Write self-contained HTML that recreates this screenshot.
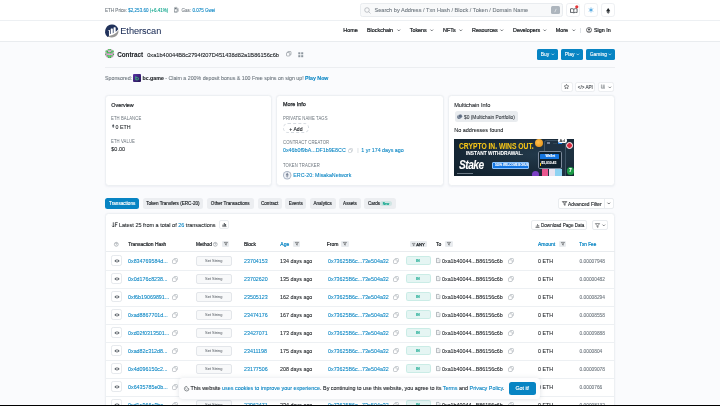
<!DOCTYPE html>
<html><head><meta charset="utf-8"><style>
html,body{margin:0;padding:0}
body{width:720px;height:406px;overflow:hidden;position:relative;background:#fafbfd;font-family:"Liberation Sans",sans-serif}
#w{position:absolute;left:0;top:0;width:720px;height:406px;will-change:transform;background:#fafbfd}
.a{position:absolute;white-space:nowrap;line-height:1;-webkit-text-stroke:0.08px currentColor}
svg.a{overflow:visible}
</style></head><body><div id="w">
<div class="a" style="left:0px;top:0px;width:720.00px;height:20.00px;background:#fff"></div>
<div class="a" style="left:0px;top:20px;width:720.00px;height:0.70px;background:#edf0f3"></div>
<div class="a" style="left:105px;top:9.00px;font-size:4.55px;color:#6c757d;font-weight:400;">ETH Price: <span style="color:#0784c3">$2,253.60</span> <span style="color:#00a186">(+6.41%)</span></div>
<svg class="a" style="left:174.3px;top:7.4px" width="4.4" height="5.4" viewBox="0 0 4.4 5.4"><path d="M0.5 5 V0.9 Q0.5 0.4 1 0.4 H2.6 Q3.1 0.4 3.1 0.9 V5 Z" fill="none" stroke="#6c757d" stroke-width="0.55"/><rect x="1" y="1" width="1.6" height="1.3" fill="#6c757d"/><path d="M3.1 2.4 H3.5 Q3.9 2.4 3.9 2.8 V4.2 Q3.9 4.6 4.2 4.4 V1.6 L3.5 0.9" fill="none" stroke="#6c757d" stroke-width="0.4"/><path d="M0 5.1 H3.6" stroke="#6c757d" stroke-width="0.5"/></svg>
<div class="a" style="left:181.5px;top:9.00px;font-size:4.55px;color:#6c757d;font-weight:400;">Gas: <span style="color:#0784c3">0.075 Gwei</span></div>
<div class="a" style="left:360.3px;top:3.2px;width:202.70px;height:13.40px;box-sizing:border-box;background:#f8f9fa;border:0.5px solid #e9ecef;border-radius:2.5px"></div>
<svg class="a" style="left:364px;top:6.5px" width="7" height="7" viewBox="0 0 7 7"><circle cx="3" cy="3" r="2.3" fill="none" stroke="#9aa0a6" stroke-width="0.6"/><path d="M4.7 4.7 L6.5 6.5" stroke="#9aa0a6" stroke-width="0.6"/></svg>
<div class="a" style="left:374.5px;top:8.00px;font-size:5.60px;color:#6c757d;font-weight:400;">Search by Address / Txn Hash / Block / Token / Domain Name</div>
<div class="a" style="left:551.3px;top:5.6px;width:8.70px;height:8.80px;background:#adb5bd;border-radius:1.5px"></div>
<svg class="a" style="left:554px;top:7.5px" width="3" height="5" viewBox="0 0 3 5"><path d="M2.2 0.8 L0.8 4.2" stroke="#fff" stroke-width="0.5"/></svg>
<div class="a" style="left:566.2px;top:3.1px;width:14.10px;height:13.60px;box-sizing:border-box;background:#fff;border:0.5px solid #eef0f3;border-radius:2.8px"></div>
<div class="a" style="left:583.6px;top:3.1px;width:14.00px;height:13.60px;box-sizing:border-box;background:#fff;border:0.5px solid #eef0f3;border-radius:2.8px"></div>
<div class="a" style="left:601px;top:3.1px;width:13.60px;height:13.60px;box-sizing:border-box;background:#fff;border:0.5px solid #eef0f3;border-radius:2.8px"></div>
<svg class="a" style="left:569.8px;top:7.6px" width="7.6" height="5.2" viewBox="0 0 7.6 5.2"><path d="M0.5 0.8 Q2 0.3 3.8 1.1 Q5.6 0.3 7.1 0.8 V4.5 Q5.6 4.1 3.8 4.8 Q2 4.1 0.5 4.5 Z M3.8 1.1 V4.8" fill="none" stroke="#343a40" stroke-width="0.75"/></svg>
<svg class="a" style="left:575px;top:4.8px" width="3.6" height="3.6" viewBox="0 0 3.6 3.6"><circle cx="1.8" cy="1.8" r="1.6" fill="#e5383b"/></svg>
<svg class="a" style="left:587.6px;top:7px" width="6" height="6" viewBox="0 0 6 6"><path d="M3 0.3 V5.7 M0.7 1.6 L5.3 4.4 M5.3 1.6 L0.7 4.4" stroke="#5dade2" stroke-width="0.6"/><circle cx="3" cy="3" r="1.3" fill="#5dade2"/></svg>
<svg class="a" style="left:605.8px;top:7.6px" width="4.4" height="5.8" viewBox="0 0 4.4 5.8"><path d="M2.2 0 L4.2 3 L2.2 4 L0.2 3 Z" fill="#212529"/><path d="M2.2 4.5 L4.2 3.5 L2.2 5.8 L0.2 3.5 Z" fill="#212529"/></svg>
<div class="a" style="left:0px;top:20.7px;width:720.00px;height:19.90px;background:#fff"></div>
<div class="a" style="left:0px;top:40.6px;width:720.00px;height:0.70px;background:#e9ecef"></div>
<svg class="a" style="left:104.6px;top:24.2px" width="13.5" height="13.5" viewBox="0 0 122 122"><path d="M25.79 58.415a5.157 5.157 0 0 1 5.181-5.156l8.59.028a5.164 5.164 0 0 1 5.164 5.164v32.48c.967-.287 2.209-.593 3.568-.913a4.3 4.3 0 0 0 3.317-4.187v-40.29a5.165 5.165 0 0 1 5.164-5.165h8.607a5.165 5.165 0 0 1 5.164 5.165v37.393s2.155-.872 4.254-1.758a4.311 4.311 0 0 0 2.632-3.967V33.634a5.164 5.164 0 0 1 5.163-5.164h8.606a5.164 5.164 0 0 1 5.164 5.164v36.71c7.462-5.408 15.024-11.912 21.025-19.733a8.662 8.662 0 0 0 1.319-8.092 60.792 60.792 0 0 0-110.25-5.034 60.788 60.788 0 0 0 13.094 78.109 7.688 7.688 0 0 0 8.34 1.073c.86-.385 2.137-1.003 3.537-1.75a4.295 4.295 0 0 0 2.4-3.835V58.415Z" fill="#21325b"/><path d="M25.6 110.516a60.793 60.793 0 0 0 96.44-49.228c0-1.402-.065-2.788-.158-4.168-22.218 33.134-63.238 48.63-96.28 53.4" fill="#979695"/></svg>
<div class="a" style="left:120.3px;top:27.00px;font-size:9.20px;color:#21325b;font-weight:400;letter-spacing:-0.05px;-webkit-text-stroke:0.05px currentColor">Etherscan</div>
<div class="a" style="left:343.3px;top:28.00px;font-size:5.40px;color:#212529;font-weight:400;-webkit-text-stroke:0.22px currentColor">Home</div>
<div class="a" style="left:367px;top:28.00px;font-size:5.40px;color:#212529;font-weight:400;-webkit-text-stroke:0.22px currentColor">Blockchain</div>
<div class="a" style="left:409.7px;top:28.00px;font-size:5.40px;color:#212529;font-weight:400;-webkit-text-stroke:0.22px currentColor">Tokens</div>
<div class="a" style="left:443px;top:28.00px;font-size:5.40px;color:#212529;font-weight:400;-webkit-text-stroke:0.22px currentColor">NFTs</div>
<div class="a" style="left:472px;top:28.00px;font-size:5.40px;color:#212529;font-weight:400;-webkit-text-stroke:0.22px currentColor">Resources</div>
<div class="a" style="left:513px;top:28.00px;font-size:5.40px;color:#212529;font-weight:400;-webkit-text-stroke:0.22px currentColor">Developers</div>
<div class="a" style="left:555.8px;top:28.00px;font-size:5.40px;color:#212529;font-weight:400;-webkit-text-stroke:0.22px currentColor">More</div>
<svg class="a" style="left:397px;top:29.2px" width="3.6" height="2.6" viewBox="0 0 3.6 2.6"><path d="M0.5 0.6 L1.8 1.9 L3.1 0.6" fill="none" stroke="#343a40" stroke-width="0.7"/></svg>
<svg class="a" style="left:430px;top:29.2px" width="3.6" height="2.6" viewBox="0 0 3.6 2.6"><path d="M0.5 0.6 L1.8 1.9 L3.1 0.6" fill="none" stroke="#343a40" stroke-width="0.7"/></svg>
<svg class="a" style="left:458.7px;top:29.2px" width="3.6" height="2.6" viewBox="0 0 3.6 2.6"><path d="M0.5 0.6 L1.8 1.9 L3.1 0.6" fill="none" stroke="#343a40" stroke-width="0.7"/></svg>
<svg class="a" style="left:500.2px;top:29.2px" width="3.6" height="2.6" viewBox="0 0 3.6 2.6"><path d="M0.5 0.6 L1.8 1.9 L3.1 0.6" fill="none" stroke="#343a40" stroke-width="0.7"/></svg>
<svg class="a" style="left:543px;top:29.2px" width="3.6" height="2.6" viewBox="0 0 3.6 2.6"><path d="M0.5 0.6 L1.8 1.9 L3.1 0.6" fill="none" stroke="#343a40" stroke-width="0.7"/></svg>
<svg class="a" style="left:571.8px;top:29.2px" width="3.6" height="2.6" viewBox="0 0 3.6 2.6"><path d="M0.5 0.6 L1.8 1.9 L3.1 0.6" fill="none" stroke="#343a40" stroke-width="0.7"/></svg>
<div class="a" style="left:580.3px;top:28px;width:0.50px;height:4.50px;background:#dee2e6"></div>
<svg class="a" style="left:585.6px;top:27.3px" width="6" height="6" viewBox="0 0 6 6"><circle cx="3" cy="3" r="2.5" fill="none" stroke="#212529" stroke-width="0.6"/><circle cx="3" cy="2.3" r="0.9" fill="#212529"/><path d="M1.4 4.6 Q3 3.2 4.6 4.6" stroke="#212529" stroke-width="0.6" fill="none"/></svg>
<div class="a" style="left:593.9px;top:28.00px;font-size:5.40px;color:#212529;font-weight:400;-webkit-text-stroke:0.22px currentColor">Sign In</div>
<svg class="a" style="left:105px;top:49.4px" width="9.3" height="9.3" viewBox="0 0 9.3 9.3"><defs><clipPath id="av"><circle cx="4.65" cy="4.65" r="4.65"/></clipPath></defs><g clip-path="url(#av)"><rect x="0.00" y="0.00" width="1.6" height="1.6" fill="#3cb44b"/><rect x="1.55" y="0.00" width="1.6" height="1.6" fill="#e58fd6"/><rect x="3.10" y="0.00" width="1.6" height="1.6" fill="#3cb44b"/><rect x="4.65" y="0.00" width="1.6" height="1.6" fill="#3cb44b"/><rect x="6.20" y="0.00" width="1.6" height="1.6" fill="#e58fd6"/><rect x="7.75" y="0.00" width="1.6" height="1.6" fill="#3cb44b"/><rect x="0.00" y="1.55" width="1.6" height="1.6" fill="#3cb44b"/><rect x="1.55" y="1.55" width="1.6" height="1.6" fill="#3cb44b"/><rect x="3.10" y="1.55" width="1.6" height="1.6" fill="#e58fd6"/><rect x="4.65" y="1.55" width="1.6" height="1.6" fill="#e58fd6"/><rect x="6.20" y="1.55" width="1.6" height="1.6" fill="#3cb44b"/><rect x="7.75" y="1.55" width="1.6" height="1.6" fill="#3cb44b"/><rect x="0.00" y="3.10" width="1.6" height="1.6" fill="#e58fd6"/><rect x="1.55" y="3.10" width="1.6" height="1.6" fill="#3cb44b"/><rect x="3.10" y="3.10" width="1.6" height="1.6" fill="#3cb44b"/><rect x="4.65" y="3.10" width="1.6" height="1.6" fill="#3cb44b"/><rect x="6.20" y="3.10" width="1.6" height="1.6" fill="#3cb44b"/><rect x="7.75" y="3.10" width="1.6" height="1.6" fill="#e58fd6"/><rect x="0.00" y="4.65" width="1.6" height="1.6" fill="#3cb44b"/><rect x="1.55" y="4.65" width="1.6" height="1.6" fill="#e58fd6"/><rect x="3.10" y="4.65" width="1.6" height="1.6" fill="#e58fd6"/><rect x="4.65" y="4.65" width="1.6" height="1.6" fill="#e58fd6"/><rect x="6.20" y="4.65" width="1.6" height="1.6" fill="#e58fd6"/><rect x="7.75" y="4.65" width="1.6" height="1.6" fill="#3cb44b"/><rect x="0.00" y="6.20" width="1.6" height="1.6" fill="#e58fd6"/><rect x="1.55" y="6.20" width="1.6" height="1.6" fill="#3cb44b"/><rect x="3.10" y="6.20" width="1.6" height="1.6" fill="#3cb44b"/><rect x="4.65" y="6.20" width="1.6" height="1.6" fill="#3cb44b"/><rect x="6.20" y="6.20" width="1.6" height="1.6" fill="#3cb44b"/><rect x="7.75" y="6.20" width="1.6" height="1.6" fill="#e58fd6"/><rect x="0.00" y="7.75" width="1.6" height="1.6" fill="#e58fd6"/><rect x="1.55" y="7.75" width="1.6" height="1.6" fill="#e58fd6"/><rect x="3.10" y="7.75" width="1.6" height="1.6" fill="#3cb44b"/><rect x="4.65" y="7.75" width="1.6" height="1.6" fill="#3cb44b"/><rect x="6.20" y="7.75" width="1.6" height="1.6" fill="#e58fd6"/><rect x="7.75" y="7.75" width="1.6" height="1.6" fill="#e58fd6"/></g></svg>
<div class="a" style="left:117.2px;top:52.00px;font-size:6.30px;color:#212529;font-weight:700;">Contract</div>
<div class="a" style="left:147.2px;top:53.00px;font-size:5.67px;color:#212529;font-weight:400;-webkit-text-stroke:0.1px currentColor">0xa1b40044B8c2794f207D451438d82a1B86156c6b</div>
<svg class="a" style="left:285.8px;top:51.3px" width="5.5" height="5.5" viewBox="0 0 5.5 5.5"><rect x="0.5" y="1.6" width="3.3" height="3.4" rx="0.6" fill="none" stroke="#6c757d" stroke-width="0.5"/><path d="M1.7 1.5 V0.9 Q1.7 0.5 2.1 0.5 H4.5 Q5 0.5 5 1 V3.4 Q5 3.8 4.6 3.8 H3.9" fill="none" stroke="#6c757d" stroke-width="0.5"/></svg>
<svg class="a" style="left:297.5px;top:51.5px" width="5.5" height="5.5" viewBox="0 0 5.5 5.5"><rect x="0.3" y="0.3" width="2" height="2" fill="#8c959d"/><rect x="3.2" y="0.3" width="2" height="2" fill="#8c959d"/><rect x="0.3" y="3.2" width="2" height="2" fill="#8c959d"/><rect x="3.2" y="3.2" width="2" height="2" fill="#8c959d"/></svg>
<div class="a" style="left:536.9px;top:49px;width:20.90px;height:10.60px;background:#0784c3;border-radius:1.6px"></div>
<div class="a" style="left:540.6999999999999px;top:53.00px;font-size:4.95px;color:#fff;font-weight:400;-webkit-text-stroke:0.1px currentColor">Buy</div>
<svg class="a" style="left:550.9px;top:52.9px" width="3.6" height="2.6" viewBox="0 0 3.6 2.6"><path d="M0.5 0.7 L1.8 2 L3.1 0.7" fill="none" stroke="#fff" stroke-width="0.6"/></svg>
<div class="a" style="left:561px;top:49px;width:21.50px;height:10.60px;background:#0784c3;border-radius:1.6px"></div>
<div class="a" style="left:564.8px;top:53.00px;font-size:4.95px;color:#fff;font-weight:400;-webkit-text-stroke:0.1px currentColor">Play</div>
<svg class="a" style="left:575.6px;top:52.9px" width="3.6" height="2.6" viewBox="0 0 3.6 2.6"><path d="M0.5 0.7 L1.8 2 L3.1 0.7" fill="none" stroke="#fff" stroke-width="0.6"/></svg>
<div class="a" style="left:585.9px;top:49px;width:29.10px;height:10.60px;background:#0784c3;border-radius:1.6px"></div>
<div class="a" style="left:589.6999999999999px;top:53.00px;font-size:4.95px;color:#fff;font-weight:400;-webkit-text-stroke:0.1px currentColor">Gaming</div>
<svg class="a" style="left:608.1px;top:52.9px" width="3.6" height="2.6" viewBox="0 0 3.6 2.6"><path d="M0.5 0.7 L1.8 2 L3.1 0.7" fill="none" stroke="#fff" stroke-width="0.6"/></svg>
<div class="a" style="left:105px;top:67px;width:510.00px;height:0.60px;background:#eceef1"></div>
<div class="a" style="left:105px;top:76.00px;font-size:5.30px;color:#6c757d;font-weight:400;"><span style="color:#6c757d">Sponsored:</span></div>
<div class="a" style="left:133.3px;top:74.3px;width:7.50px;height:7.40px;background:linear-gradient(135deg,#5b34a8,#241552);border-radius:1px"></div>
<svg class="a" style="left:135.2px;top:75.6px" width="4" height="4.5" viewBox="0 0 4 4.5"><path d="M0.8 0.3 V3.8 H2.6 Q3.6 3.8 3.6 2.7 Q3.6 1.7 2.6 1.7 H0.8" fill="none" stroke="#3ddc84" stroke-width="0.7"/></svg>
<div class="a" style="left:142.5px;top:76.00px;font-size:5.25px;color:#6c757d;font-weight:400;"><b style="color:#212529">bc.game</b> <span style="color:#6c757d">- Claim a 200% deposit bonus &amp; 100 Free spins on sign up!</span> <b style="color:#0784c3">Play Now</b></div>
<div class="a" style="left:560.9px;top:82px;width:11.80px;height:9.50px;box-sizing:border-box;background:#fff;border:0.5px solid #eceef1;border-radius:2.2px"></div>
<div class="a" style="left:574.6px;top:82px;width:20.80px;height:9.50px;box-sizing:border-box;background:#fff;border:0.5px solid #eceef1;border-radius:2.2px"></div>
<div class="a" style="left:597.8px;top:82px;width:16.70px;height:9.50px;box-sizing:border-box;background:#fff;border:0.5px solid #eceef1;border-radius:2.2px"></div>
<svg class="a" style="left:564.3px;top:84.3px" width="5" height="5" viewBox="0 0 5 5"><path d="M2.5 0.3 L3.2 1.8 L4.8 2 L3.6 3.1 L3.9 4.7 L2.5 3.9 L1.1 4.7 L1.4 3.1 L0.2 2 L1.8 1.8Z" fill="none" stroke="#212529" stroke-width="0.5"/></svg>
<div class="a" style="left:577.8px;top:86.00px;font-size:4.60px;color:#343a40;font-weight:400;">&lt;/&gt; API</div>
<svg class="a" style="left:601.2px;top:84.4px" width="4.4" height="4.6" viewBox="0 0 4.4 4.6"><path d="M0.4 0.5 V4.2 H4 M1.6 1.2 H3.8 M1.6 2.3 H3.8 M1.6 3.3 H3.8" stroke="#495057" stroke-width="0.5" fill="none"/></svg>
<svg class="a" style="left:607.6px;top:85.5px" width="3.6" height="2.6" viewBox="0 0 3.6 2.6"><path d="M0.5 0.7 L1.8 2 L3.1 0.7" fill="none" stroke="#343a40" stroke-width="0.6"/></svg>
<div class="a" style="left:105.1px;top:94.9px;width:166.80px;height:90.80px;box-sizing:border-box;background:#fff;border:0.5px solid #edf0f3;border-radius:3.5px;box-shadow:0 0.5px 2px rgba(189,197,209,.2)"></div>
<div class="a" style="left:276.2px;top:94.9px;width:167.40px;height:90.80px;box-sizing:border-box;background:#fff;border:0.5px solid #edf0f3;border-radius:3.5px;box-shadow:0 0.5px 2px rgba(189,197,209,.2)"></div>
<div class="a" style="left:448.4px;top:94.9px;width:166.30px;height:90.80px;box-sizing:border-box;background:#fff;border:0.5px solid #edf0f3;border-radius:3.5px;box-shadow:0 0.5px 2px rgba(189,197,209,.2)"></div>
<div class="a" style="left:111.3px;top:103.00px;font-size:5.40px;color:#212529;font-weight:400;-webkit-text-stroke:0.18px currentColor">Overview</div>
<div class="a" style="left:111.3px;top:117.00px;font-size:4.70px;color:#6c757d;font-weight:400;transform:scaleX(0.9000);transform-origin:0 0;letter-spacing:0.1px;-webkit-text-stroke:0px">ETH BALANCE</div>
<svg class="a" style="left:111.7px;top:124.4px" width="2.4" height="4" viewBox="0 0 2.4 4"><path d="M1.2 0 L2.4 2 L1.2 2.7 L0 2Z M1.2 3 L2.4 2.3 L1.2 4 L0 2.3Z" fill="#495057"/></svg>
<div class="a" style="left:115.6px;top:125.00px;font-size:5.30px;color:#212529;font-weight:400;">0 ETH</div>
<div class="a" style="left:111.3px;top:140.00px;font-size:4.70px;color:#6c757d;font-weight:400;transform:scaleX(0.9000);transform-origin:0 0;letter-spacing:0.1px;-webkit-text-stroke:0px">ETH VALUE</div>
<div class="a" style="left:111.3px;top:147.00px;font-size:5.50px;color:#212529;font-weight:400;">$0.00</div>
<div class="a" style="left:283px;top:102.00px;font-size:5.40px;color:#212529;font-weight:400;-webkit-text-stroke:0.25px currentColor">More Info</div>
<div class="a" style="left:283px;top:117.00px;font-size:4.70px;color:#6c757d;font-weight:400;transform:scaleX(0.9000);transform-origin:0 0;letter-spacing:0.1px;-webkit-text-stroke:0px">PRIVATE NAME TAGS</div>
<div class="a" style="left:283px;top:123.2px;width:26.30px;height:10.20px;box-sizing:border-box;border:0.6px dashed #d5dae0;border-radius:5px;background:#fff"></div>
<div class="a" style="left:289.3px;top:127.00px;font-size:5.10px;color:#212529;font-weight:400;-webkit-text-stroke:0.12px currentColor">+ Add</div>
<div class="a" style="left:283px;top:141.00px;font-size:4.70px;color:#6c757d;font-weight:400;transform:scaleX(0.9000);transform-origin:0 0;letter-spacing:0.1px;-webkit-text-stroke:0px">CONTRACT CREATOR</div>
<div class="a" style="left:283px;top:148.00px;font-size:5.30px;color:#0784c3;font-weight:400;">0x46b0f9bA...DF1b9E8CC</div>
<svg class="a" style="left:348px;top:147.7px" width="5" height="5" viewBox="0 0 5 5"><rect x="0.5" y="1.5" width="3" height="3" rx="0.5" fill="none" stroke="#adb5bd" stroke-width="0.45"/><path d="M1.6 1.4 V0.9 Q1.6 0.5 2 0.5 H4 Q4.5 0.5 4.5 1 V3 Q4.5 3.4 4.1 3.4 H3.6" fill="none" stroke="#adb5bd" stroke-width="0.45"/></svg>
<div class="a" style="left:357.2px;top:148.00px;font-size:5.50px;color:#ced4da;font-weight:400;">|</div>
<div class="a" style="left:361.3px;top:148.00px;font-size:5.35px;color:#0784c3;font-weight:400;">1 yr 174 days ago</div>
<div class="a" style="left:283px;top:164.00px;font-size:4.70px;color:#6c757d;font-weight:400;transform:scaleX(0.9000);transform-origin:0 0;letter-spacing:0.1px;-webkit-text-stroke:0px">TOKEN TRACKER</div>
<svg class="a" style="left:283px;top:170.5px" width="8.4" height="8.4" viewBox="0 0 8.4 8.4"><circle cx="4.2" cy="4.2" r="4.2" fill="#aab4c4"/><circle cx="4.2" cy="4.2" r="3.2" fill="#eef1f6"/><path d="M4.2 1.5 L5.7 4.1 L4.2 5 L2.7 4.1Z M4.2 5.4 L5.7 4.5 L4.2 6.8 L2.7 4.5Z" fill="#7d8799"/></svg>
<div class="a" style="left:293.3px;top:173.00px;font-size:5.30px;color:#0784c3;font-weight:400;">ERC-20: MisakaNetwork</div>
<div class="a" style="left:454.2px;top:103.00px;font-size:5.60px;color:#212529;font-weight:400;-webkit-text-stroke:0.1px currentColor">Multichain Info</div>
<div class="a" style="left:454.5px;top:111.3px;width:63.50px;height:10.50px;background:#e9ecef;border-radius:2.5px"></div>
<svg class="a" style="left:457.3px;top:114.1px" width="5.4" height="5.4" viewBox="0 0 5.4 5.4"><circle cx="2.1" cy="3.1" r="2" fill="#5c6b80"/><circle cx="3.3" cy="2.2" r="2" fill="#5c6b80" stroke="#e9ecef" stroke-width="0.4"/></svg>
<div class="a" style="left:464px;top:116.00px;font-size:4.85px;color:#343a40;font-weight:400;">$0 (Multichain Portfolio)</div>
<div class="a" style="left:454.2px;top:128.00px;font-size:5.50px;color:#212529;font-weight:400;">No addresses found</div>
<div class="a" style="left:454.3px;top:138.8px;width:120.2px;height:37.5px;background:#10222f;overflow:hidden">
<div class="a" style="left:0;top:0;width:121px;height:38px;background:radial-gradient(ellipse at 70% 40%,#22394a 0%,#1a2c3b 45%,#0f1f2b 100%)"></div>
<div class="a" style="left:4.4px;top:4.3px;font-size:8.2px;font-weight:700;color:#f5c518;line-height:1;transform:scaleX(0.82);transform-origin:0 0">CRYPTO IN. WINS OUT.</div>
<div class="a" style="left:12px;top:12.2px;font-size:5.6px;font-weight:700;color:#fff;line-height:1;transform:scaleX(0.87);transform-origin:0 0">INSTANT WITHDRAWAL.</div>
<div class="a" style="left:5px;top:20px;font-size:12px;font-weight:700;font-style:italic;color:#fff;line-height:1;letter-spacing:-0.6px;transform:scaleX(0.85);transform-origin:0 0">Stake</div>
<div class="a" style="left:2.5px;top:34px;width:16px;height:1px;background:#6c7a86"></div>
<div class="a" style="left:38.2px;top:23.7px;width:36.8px;height:7px;box-sizing:border-box;background:#1475e1;border:0.5px solid #8cc4ff;border-radius:1px"></div>
<div class="a" style="left:41.2px;top:25.7px;font-size:3.3px;font-weight:700;color:#fff;line-height:1;transform:scaleX(0.85);transform-origin:0 0">100% WELCOME BONUS</div>
<div class="a" style="left:89.7px;top:1.2px;width:21.7px;height:40px;box-sizing:border-box;background:#1f3243;border:0.9px solid #3e5466;border-radius:2.5px"></div>
<div class="a" style="left:92.5px;top:3.6px;width:3.5px;height:1.6px;background:#b1bad3;opacity:.6"></div>
<div class="a" style="left:98.5px;top:3.8px;width:4.5px;height:1.4px;background:#2f4553"></div>
<div class="a" style="left:104px;top:3.6px;width:4px;height:2px;background:#1475e1"></div>
<div class="a" style="left:84px;top:12.2px;width:23.7px;height:17.6px;box-sizing:border-box;background:#0f212e;border:0.8px solid #7d8a9c;border-radius:1.8px"></div>
<div class="a" style="left:85.6px;top:15.3px;width:19.6px;height:4.9px;background:#1475e1;border-radius:0.5px"></div>
<div class="a" style="left:91.3px;top:16.3px;font-size:3.3px;font-weight:700;color:#fff;line-height:1">Wallet</div>
<div class="a" style="left:85.7px;top:23.8px;width:0.8px;height:3px;background:#f5c518"></div>
<div class="a" style="left:87px;top:23.6px;font-size:3.4px;color:#fff;font-weight:700;line-height:1">$5,010.45</div>
<div class="a" style="left:80.9px;top:0.3px;width:7.8px;height:7.8px;background:radial-gradient(circle at 40% 40%,#ffc14d,#e08a10);border-radius:50%"></div>
<div class="a" style="left:111.4px;top:2.9px;width:7.8px;height:7.8px;box-sizing:border-box;background:#d62a3f;border:0.9px solid #fff;border-radius:50%"></div>
<div class="a" style="left:112.4px;top:28.2px;width:7.6px;height:7.6px;background:#1c9b47;border-radius:50%"></div>
<div class="a" style="left:114.6px;top:29.6px;font-size:5px;font-weight:700;color:#fff;line-height:1">7</div>
<div class="a" style="left:77.3px;top:32.2px;width:7px;height:7px;background:#7b3fc4;border-radius:50%"></div>
<div class="a" style="left:88px;top:30.4px;width:6.2px;height:7.5px;background:#e8578f"></div>
<div class="a" style="left:94.6px;top:30.4px;width:6.2px;height:7.5px;background:#e9e4f0"></div>
<div class="a" style="left:101.2px;top:30.4px;width:6.2px;height:7.5px;background:#8fd3f2"></div>
</div>
<div class="a" style="left:558px;top:137.5px;width:8.70px;height:5.20px;background:#fff;border-radius:2px"></div>
<div class="a" style="left:559.6px;top:139.00px;font-size:4.20px;color:#212529;font-weight:400;">Ad</div>
<div class="a" style="left:105.2px;top:198.1px;width:34.00px;height:10.80px;background:#0784c3;border-radius:2.5px"></div>
<div class="a" style="left:105.2px;width:34.00px;text-align:center;top:202.00px;font-size:4.60px;color:#fff;font-weight:400;-webkit-text-stroke:0.15px currentColor">Transactions</div>
<div class="a" style="left:142.7px;top:198.1px;width:60.40px;height:10.80px;background:#eceef1;border-radius:2.5px"></div>
<div class="a" style="left:142.7px;width:60.40px;text-align:center;top:202.00px;font-size:4.60px;color:#212529;font-weight:400;-webkit-text-stroke:0.15px currentColor">Token Transfers (ERC-20)</div>
<div class="a" style="left:206.9px;top:198.1px;width:46.70px;height:10.80px;background:#eceef1;border-radius:2.5px"></div>
<div class="a" style="left:206.9px;width:46.70px;text-align:center;top:202.00px;font-size:4.60px;color:#212529;font-weight:400;-webkit-text-stroke:0.15px currentColor">Other Transactions</div>
<div class="a" style="left:257.5px;top:198.1px;width:24.40px;height:10.80px;background:#eceef1;border-radius:2.5px"></div>
<div class="a" style="left:257.5px;width:24.40px;text-align:center;top:202.00px;font-size:4.60px;color:#212529;font-weight:400;-webkit-text-stroke:0.15px currentColor">Contract</div>
<div class="a" style="left:285.3px;top:198.1px;width:20.80px;height:10.80px;background:#eceef1;border-radius:2.5px"></div>
<div class="a" style="left:285.3px;width:20.80px;text-align:center;top:202.00px;font-size:4.60px;color:#212529;font-weight:400;-webkit-text-stroke:0.15px currentColor">Events</div>
<div class="a" style="left:309.7px;top:198.1px;width:25.90px;height:10.80px;background:#eceef1;border-radius:2.5px"></div>
<div class="a" style="left:309.7px;width:25.90px;text-align:center;top:202.00px;font-size:4.60px;color:#212529;font-weight:400;-webkit-text-stroke:0.15px currentColor">Analytics</div>
<div class="a" style="left:339.4px;top:198.1px;width:21.20px;height:10.80px;background:#eceef1;border-radius:2.5px"></div>
<div class="a" style="left:339.4px;width:21.20px;text-align:center;top:202.00px;font-size:4.60px;color:#212529;font-weight:400;-webkit-text-stroke:0.15px currentColor">Assets</div>
<div class="a" style="left:363.9px;top:198.1px;width:31.90px;height:10.80px;background:#eceef1;border-radius:2.5px"></div>
<div class="a" style="left:367.9px;top:202.00px;font-size:4.60px;color:#212529;font-weight:400;-webkit-text-stroke:0.15px currentColor">Cards</div>
<div class="a" style="left:379.8px;top:200.6px;width:12.40px;height:5.40px;background:rgba(0,161,134,0.12);border-radius:2.5px"></div>
<div class="a" style="left:379.8px;width:12.40px;text-align:center;top:203.00px;font-size:3.20px;color:#00a186;font-weight:700;">New</div>
<div class="a" style="left:557.6px;top:198.4px;width:56.70px;height:10.60px;box-sizing:border-box;background:#fff;border:0.5px solid #e9ecef;border-radius:2px"></div>
<div class="a" style="left:603.9px;top:198.4px;width:0.50px;height:10.60px;background:#e9ecef"></div>
<svg class="a" style="left:561.5px;top:201.1px" width="5.2" height="5" viewBox="0 0 5.2 5"><path d="M0.4 0.6 H4.8 L3.1 2.6 V4.4 L2.1 3.8 V2.6 Z" fill="none" stroke="#212529" stroke-width="0.6"/><path d="M1.2 0.6 L2.6 2.2 L4 0.6" fill="none" stroke="#212529" stroke-width="0.4"/></svg>
<div class="a" style="left:568px;top:203.00px;font-size:4.85px;color:#212529;font-weight:400;-webkit-text-stroke:0.12px currentColor">Advanced Filter</div>
<svg class="a" style="left:607.3px;top:202.2px" width="3.6" height="2.6" viewBox="0 0 3.6 2.6"><path d="M0.5 0.7 L1.8 2 L3.1 0.7" fill="none" stroke="#212529" stroke-width="0.65"/></svg>
<div class="a" style="left:105.2px;top:213.2px;width:510.00px;height:206.80px;box-sizing:border-box;background:#fff;border:0.5px solid #edf0f3;border-radius:3.5px;box-shadow:0 0.5px 2px rgba(189,197,209,.2)"></div>
<svg class="a" style="left:111.6px;top:221.9px" width="6" height="5.6" viewBox="0 0 6 5.6"><path d="M1.3 0.3 V5 M0.2 3.8 L1.3 5 L2.4 3.8" stroke="#212529" stroke-width="0.7" fill="none"/><path d="M3.3 0.6 H5.7 M3.3 0.6 V5 M3.3 2.6 H5.2" stroke="#212529" stroke-width="0.7" fill="none"/></svg>
<div class="a" style="left:118.9px;top:223.00px;font-size:5.50px;color:#212529;font-weight:400;">Latest 25 from a total of <span style="color:#0784c3">26</span> transactions</div>
<div class="a" style="left:219px;top:220.2px;width:9.60px;height:9.20px;box-sizing:border-box;background:#fff;border:0.5px solid #e9ecef;border-radius:2px"></div>
<svg class="a" style="left:221.6px;top:222.2px" width="5" height="5" viewBox="0 0 5 5"><path d="M1 4.4 V2.6 M2.3 4.4 V1 M3.6 4.4 V2" stroke="#343a40" stroke-width="0.9"/><path d="M0.3 4.6 H4.7" stroke="#343a40" stroke-width="0.4"/></svg>
<div class="a" style="left:530.9px;top:220px;width:56.30px;height:10.40px;box-sizing:border-box;background:#fff;border:0.5px solid #e9ecef;border-radius:2px"></div>
<svg class="a" style="left:534.5px;top:222.8px" width="5" height="5" viewBox="0 0 5 5"><path d="M0.5 4.5 H4.5 M1.3 3.8 V2.6 M2.5 3.8 V1 M3.7 3.8 V2" stroke="#212529" stroke-width="0.55"/></svg>
<div class="a" style="left:541px;top:224.00px;font-size:4.60px;color:#212529;font-weight:400;-webkit-text-stroke:0.1px currentColor">Download Page Data</div>
<div class="a" style="left:591.5px;top:220px;width:16.50px;height:9.70px;box-sizing:border-box;background:#fff;border:0.5px solid #e9ecef;border-radius:2px"></div>
<svg class="a" style="left:594.5px;top:222.6px" width="5" height="5" viewBox="0 0 5 5"><path d="M0.4 0.6 H4.6 L3 2.6 V4.4 L2 3.8 V2.6 Z" fill="none" stroke="#212529" stroke-width="0.5"/></svg>
<svg class="a" style="left:601.5px;top:223.9px" width="3.6" height="2.6" viewBox="0 0 3.6 2.6"><path d="M0.5 0.6 L1.8 1.9 L3.1 0.6" fill="none" stroke="#212529" stroke-width="0.55"/></svg>
<svg class="a" style="left:114.3px;top:241.9px" width="4.6" height="4.6" viewBox="0 0 4.6 4.6"><circle cx="2.3" cy="2.3" r="1.95" fill="none" stroke="#6c757d" stroke-width="0.45"/><path d="M1.6 1.8 Q1.7 1.1 2.3 1.1 Q3 1.1 3 1.7 Q3 2.2 2.3 2.5 V2.8 M2.3 3.3 V3.5" stroke="#6c757d" stroke-width="0.45" fill="none"/></svg>
<div class="a" style="left:128.2px;top:243.00px;font-size:4.90px;color:#212529;font-weight:400;-webkit-text-stroke:0.2px currentColor">Transaction Hash</div>
<div class="a" style="left:195.9px;top:243.00px;font-size:4.80px;color:#212529;font-weight:400;-webkit-text-stroke:0.2px currentColor">Method</div>
<svg class="a" style="left:213.4px;top:241.9px" width="4.6" height="4.6" viewBox="0 0 4.6 4.6"><circle cx="2.3" cy="2.3" r="1.95" fill="none" stroke="#6c757d" stroke-width="0.45"/><path d="M1.6 1.8 Q1.7 1.1 2.3 1.1 Q3 1.1 3 1.7 Q3 2.2 2.3 2.5 V2.8 M2.3 3.3 V3.5" stroke="#6c757d" stroke-width="0.45" fill="none"/></svg>
<div class="a" style="left:221.6px;top:241.1px;width:7.80px;height:6.00px;background:#e9ecef;border-radius:1.2px"></div>
<svg class="a" style="left:223.6px;top:242.4px" width="3.8" height="3.6" viewBox="0 0 3.8 3.6"><path d="M0.3 0.4 H3.5 L2.3 1.9 V3.2 L1.5 2.8 V1.9 Z" fill="none" stroke="#212529" stroke-width="0.45"/></svg>
<div class="a" style="left:243.9px;top:242.00px;font-size:5.00px;color:#212529;font-weight:400;-webkit-text-stroke:0.2px currentColor">Block</div>
<div class="a" style="left:280.3px;top:242.00px;font-size:5.00px;color:#0784c3;font-weight:400;-webkit-text-stroke:0.2px currentColor">Age</div>
<div class="a" style="left:292.5px;top:241.1px;width:7.80px;height:6.00px;background:#e9ecef;border-radius:1.2px"></div>
<svg class="a" style="left:294.5px;top:242.4px" width="3.8" height="3.6" viewBox="0 0 3.8 3.6"><path d="M0.3 0.4 H3.5 L2.3 1.9 V3.2 L1.5 2.8 V1.9 Z" fill="none" stroke="#212529" stroke-width="0.45"/></svg>
<div class="a" style="left:326.7px;top:242.00px;font-size:5.00px;color:#212529;font-weight:400;-webkit-text-stroke:0.2px currentColor">From</div>
<div class="a" style="left:341.4px;top:241.1px;width:7.80px;height:6.00px;background:#e9ecef;border-radius:1.2px"></div>
<svg class="a" style="left:343.4px;top:242.4px" width="3.8" height="3.6" viewBox="0 0 3.8 3.6"><path d="M0.3 0.4 H3.5 L2.3 1.9 V3.2 L1.5 2.8 V1.9 Z" fill="none" stroke="#212529" stroke-width="0.45"/></svg>
<div class="a" style="left:410px;top:241.1px;width:16.70px;height:6.00px;background:#e9ecef;border-radius:1.2px"></div>
<svg class="a" style="left:411.5px;top:242.5px" width="3.4" height="3.2" viewBox="0 0 3.4 3.2"><path d="M0.3 0.4 H3.1 L2 1.7 V2.9 L1.3 2.5 V1.7 Z" fill="none" stroke="#212529" stroke-width="0.4"/></svg>
<div class="a" style="left:416.3px;top:243.00px;font-size:4.10px;color:#212529;font-weight:400;-webkit-text-stroke:0.25px currentColor">ANY</div>
<div class="a" style="left:436.1px;top:242.00px;font-size:5.00px;color:#212529;font-weight:400;-webkit-text-stroke:0.2px currentColor">To</div>
<div class="a" style="left:445px;top:241.1px;width:7.80px;height:6.00px;background:#e9ecef;border-radius:1.2px"></div>
<svg class="a" style="left:447.0px;top:242.4px" width="3.8" height="3.6" viewBox="0 0 3.8 3.6"><path d="M0.3 0.4 H3.5 L2.3 1.9 V3.2 L1.5 2.8 V1.9 Z" fill="none" stroke="#212529" stroke-width="0.45"/></svg>
<div class="a" style="left:538px;top:242.00px;font-size:5.00px;color:#0784c3;font-weight:400;-webkit-text-stroke:0.2px currentColor">Amount</div>
<div class="a" style="left:558.9px;top:241.1px;width:7.00px;height:6.00px;background:#e9ecef;border-radius:1.2px"></div>
<svg class="a" style="left:560.5px;top:242.4px" width="3.8" height="3.6" viewBox="0 0 3.8 3.6"><path d="M0.3 0.4 H3.5 L2.3 1.9 V3.2 L1.5 2.8 V1.9 Z" fill="none" stroke="#212529" stroke-width="0.45"/></svg>
<div class="a" style="left:579.2px;top:243.00px;font-size:4.65px;color:#0784c3;font-weight:400;-webkit-text-stroke:0.2px currentColor">Txn Fee</div>
<div class="a" style="left:105.5px;top:251px;width:509.40px;height:0.60px;background:#e9ecef"></div>
<div class="a" style="left:110.9px;top:255.4px;width:11.10px;height:10.70px;box-sizing:border-box;background:#fff;border:0.5px solid #e6e9ed;border-radius:2.2px"></div>
<svg class="a" style="left:113.6px;top:258.7px" width="6" height="4.2" viewBox="0 0 6 4.2"><path d="M0.3 2.1 Q3 -0.9 5.7 2.1 Q3 5.1 0.3 2.1Z" fill="#5c636a"/><circle cx="3" cy="2.1" r="1.05" fill="#fff"/><circle cx="3" cy="2.1" r="0.6" fill="#343a40"/></svg>
<div class="a" style="left:128px;top:259.00px;font-size:5.80px;color:#0784c3;font-weight:400;transform:scaleX(0.9200);transform-origin:0 0;">0x834769584d...</div>
<svg class="a" style="left:172px;top:257.90000000000003px" width="6" height="6" viewBox="0 0 6 6"><rect x="0.5" y="1.8" width="3.7" height="3.7" rx="0.8" fill="none" stroke="#9aa2a9" stroke-width="0.55"/><path d="M1.9 1.6 V1.3 Q1.9 0.5 2.7 0.5 H4.6 Q5.4 0.5 5.4 1.3 V3.2 Q5.4 4 4.6 4 H4.3" fill="none" stroke="#9aa2a9" stroke-width="0.55"/></svg>
<div class="a" style="left:196.2px;top:256.1px;width:35.80px;height:9.50px;box-sizing:border-box;background:#f8f9fa;border:0.5px solid #e3e6ea;border-radius:2px"></div>
<div class="a" style="left:196.4px;width:35.40px;text-align:center;top:259.00px;font-size:4.40px;color:#495057;font-weight:400;transform:scaleX(0.9000);transform-origin:50% 0;-webkit-text-stroke:0px">Set String</div>
<div class="a" style="left:243.9px;top:259.00px;font-size:5.80px;color:#0784c3;font-weight:400;transform:scaleX(0.9200);transform-origin:0 0;">23704153</div>
<div class="a" style="left:280.3px;top:259.00px;font-size:5.80px;color:#212529;font-weight:400;transform:scaleX(0.9300);transform-origin:0 0;">134 days ago</div>
<div class="a" style="left:327.7px;top:259.00px;font-size:5.80px;color:#0784c3;font-weight:400;transform:scaleX(0.9200);transform-origin:0 0;">0x73625B6c...73e504a32</div>
<svg class="a" style="left:393.1px;top:257.90000000000003px" width="6" height="6" viewBox="0 0 6 6"><rect x="0.5" y="1.8" width="3.7" height="3.7" rx="0.8" fill="none" stroke="#9aa2a9" stroke-width="0.55"/><path d="M1.9 1.6 V1.3 Q1.9 0.5 2.7 0.5 H4.6 Q5.4 0.5 5.4 1.3 V3.2 Q5.4 4 4.6 4 H4.3" fill="none" stroke="#9aa2a9" stroke-width="0.55"/></svg>
<div class="a" style="left:405.9px;top:256.1px;width:25.10px;height:9.40px;box-sizing:border-box;background:rgba(0,161,134,.1);border:0.5px solid rgba(0,161,134,.12);border-radius:2.2px"></div>
<div class="a" style="left:416.3px;top:260.00px;font-size:3.30px;color:#00a186;font-weight:700;">IN</div>
<svg class="a" style="left:436.2px;top:258.3px" width="4.4" height="5" viewBox="0 0 4.4 5"><path d="M0.5 0.4 H2.9 L3.9 1.4 V4.6 H0.5Z" fill="none" stroke="#6c757d" stroke-width="0.5"/><path d="M1.3 2 H3 M1.3 3 H3" stroke="#adb5bd" stroke-width="0.35"/></svg>
<div class="a" style="left:442.3px;top:259.00px;font-size:5.80px;color:#212529;font-weight:400;transform:scaleX(0.9200);transform-origin:0 0;">0xa1b40044...B86156c6b</div>
<svg class="a" style="left:508.4px;top:257.90000000000003px" width="6" height="6" viewBox="0 0 6 6"><rect x="0.5" y="1.8" width="3.7" height="3.7" rx="0.8" fill="none" stroke="#9aa2a9" stroke-width="0.55"/><path d="M1.9 1.6 V1.3 Q1.9 0.5 2.7 0.5 H4.6 Q5.4 0.5 5.4 1.3 V3.2 Q5.4 4 4.6 4 H4.3" fill="none" stroke="#9aa2a9" stroke-width="0.55"/></svg>
<div class="a" style="left:538.2px;top:259.00px;font-size:5.80px;color:#212529;font-weight:400;transform:scaleX(0.9200);transform-origin:0 0;">0 ETH</div>
<div class="a" style="left:579.6px;top:260.00px;font-size:4.80px;color:#6c757d;font-weight:400;">0.00007948</div>
<div class="a" style="left:105.5px;top:270.0px;width:509.40px;height:0.55px;background:#edf0f3"></div>
<div class="a" style="left:110.9px;top:273.40000000000003px;width:11.10px;height:10.70px;box-sizing:border-box;background:#fff;border:0.5px solid #e6e9ed;border-radius:2.2px"></div>
<svg class="a" style="left:113.6px;top:276.7px" width="6" height="4.2" viewBox="0 0 6 4.2"><path d="M0.3 2.1 Q3 -0.9 5.7 2.1 Q3 5.1 0.3 2.1Z" fill="#5c636a"/><circle cx="3" cy="2.1" r="1.05" fill="#fff"/><circle cx="3" cy="2.1" r="0.6" fill="#343a40"/></svg>
<div class="a" style="left:128px;top:277.00px;font-size:5.80px;color:#0784c3;font-weight:400;transform:scaleX(0.9200);transform-origin:0 0;">0x0d176c8238...</div>
<svg class="a" style="left:172px;top:275.90000000000003px" width="6" height="6" viewBox="0 0 6 6"><rect x="0.5" y="1.8" width="3.7" height="3.7" rx="0.8" fill="none" stroke="#9aa2a9" stroke-width="0.55"/><path d="M1.9 1.6 V1.3 Q1.9 0.5 2.7 0.5 H4.6 Q5.4 0.5 5.4 1.3 V3.2 Q5.4 4 4.6 4 H4.3" fill="none" stroke="#9aa2a9" stroke-width="0.55"/></svg>
<div class="a" style="left:196.2px;top:274.1px;width:35.80px;height:9.50px;box-sizing:border-box;background:#f8f9fa;border:0.5px solid #e3e6ea;border-radius:2px"></div>
<div class="a" style="left:196.4px;width:35.40px;text-align:center;top:277.00px;font-size:4.40px;color:#495057;font-weight:400;transform:scaleX(0.9000);transform-origin:50% 0;-webkit-text-stroke:0px">Set String</div>
<div class="a" style="left:243.9px;top:277.00px;font-size:5.80px;color:#0784c3;font-weight:400;transform:scaleX(0.9200);transform-origin:0 0;">23702620</div>
<div class="a" style="left:280.3px;top:277.00px;font-size:5.80px;color:#212529;font-weight:400;transform:scaleX(0.9300);transform-origin:0 0;">135 days ago</div>
<div class="a" style="left:327.7px;top:277.00px;font-size:5.80px;color:#0784c3;font-weight:400;transform:scaleX(0.9200);transform-origin:0 0;">0x73625B6c...73e504a32</div>
<svg class="a" style="left:393.1px;top:275.90000000000003px" width="6" height="6" viewBox="0 0 6 6"><rect x="0.5" y="1.8" width="3.7" height="3.7" rx="0.8" fill="none" stroke="#9aa2a9" stroke-width="0.55"/><path d="M1.9 1.6 V1.3 Q1.9 0.5 2.7 0.5 H4.6 Q5.4 0.5 5.4 1.3 V3.2 Q5.4 4 4.6 4 H4.3" fill="none" stroke="#9aa2a9" stroke-width="0.55"/></svg>
<div class="a" style="left:405.9px;top:274.1px;width:25.10px;height:9.40px;box-sizing:border-box;background:rgba(0,161,134,.1);border:0.5px solid rgba(0,161,134,.12);border-radius:2.2px"></div>
<div class="a" style="left:416.3px;top:278.00px;font-size:3.30px;color:#00a186;font-weight:700;">IN</div>
<svg class="a" style="left:436.2px;top:276.3px" width="4.4" height="5" viewBox="0 0 4.4 5"><path d="M0.5 0.4 H2.9 L3.9 1.4 V4.6 H0.5Z" fill="none" stroke="#6c757d" stroke-width="0.5"/><path d="M1.3 2 H3 M1.3 3 H3" stroke="#adb5bd" stroke-width="0.35"/></svg>
<div class="a" style="left:442.3px;top:277.00px;font-size:5.80px;color:#212529;font-weight:400;transform:scaleX(0.9200);transform-origin:0 0;">0xa1b40044...B86156c6b</div>
<svg class="a" style="left:508.4px;top:275.90000000000003px" width="6" height="6" viewBox="0 0 6 6"><rect x="0.5" y="1.8" width="3.7" height="3.7" rx="0.8" fill="none" stroke="#9aa2a9" stroke-width="0.55"/><path d="M1.9 1.6 V1.3 Q1.9 0.5 2.7 0.5 H4.6 Q5.4 0.5 5.4 1.3 V3.2 Q5.4 4 4.6 4 H4.3" fill="none" stroke="#9aa2a9" stroke-width="0.55"/></svg>
<div class="a" style="left:538.2px;top:277.00px;font-size:5.80px;color:#212529;font-weight:400;transform:scaleX(0.9200);transform-origin:0 0;">0 ETH</div>
<div class="a" style="left:579.6px;top:278.00px;font-size:4.80px;color:#6c757d;font-weight:400;">0.00000482</div>
<div class="a" style="left:105.5px;top:288.0px;width:509.40px;height:0.55px;background:#edf0f3"></div>
<div class="a" style="left:110.9px;top:291.40000000000003px;width:11.10px;height:10.70px;box-sizing:border-box;background:#fff;border:0.5px solid #e6e9ed;border-radius:2.2px"></div>
<svg class="a" style="left:113.6px;top:294.7px" width="6" height="4.2" viewBox="0 0 6 4.2"><path d="M0.3 2.1 Q3 -0.9 5.7 2.1 Q3 5.1 0.3 2.1Z" fill="#5c636a"/><circle cx="3" cy="2.1" r="1.05" fill="#fff"/><circle cx="3" cy="2.1" r="0.6" fill="#343a40"/></svg>
<div class="a" style="left:128px;top:295.00px;font-size:5.80px;color:#0784c3;font-weight:400;transform:scaleX(0.9200);transform-origin:0 0;">0xf6b19069891...</div>
<svg class="a" style="left:172px;top:293.90000000000003px" width="6" height="6" viewBox="0 0 6 6"><rect x="0.5" y="1.8" width="3.7" height="3.7" rx="0.8" fill="none" stroke="#9aa2a9" stroke-width="0.55"/><path d="M1.9 1.6 V1.3 Q1.9 0.5 2.7 0.5 H4.6 Q5.4 0.5 5.4 1.3 V3.2 Q5.4 4 4.6 4 H4.3" fill="none" stroke="#9aa2a9" stroke-width="0.55"/></svg>
<div class="a" style="left:196.2px;top:292.1px;width:35.80px;height:9.50px;box-sizing:border-box;background:#f8f9fa;border:0.5px solid #e3e6ea;border-radius:2px"></div>
<div class="a" style="left:196.4px;width:35.40px;text-align:center;top:295.00px;font-size:4.40px;color:#495057;font-weight:400;transform:scaleX(0.9000);transform-origin:50% 0;-webkit-text-stroke:0px">Set String</div>
<div class="a" style="left:243.9px;top:295.00px;font-size:5.80px;color:#0784c3;font-weight:400;transform:scaleX(0.9200);transform-origin:0 0;">23505123</div>
<div class="a" style="left:280.3px;top:295.00px;font-size:5.80px;color:#212529;font-weight:400;transform:scaleX(0.9300);transform-origin:0 0;">162 days ago</div>
<div class="a" style="left:327.7px;top:295.00px;font-size:5.80px;color:#0784c3;font-weight:400;transform:scaleX(0.9200);transform-origin:0 0;">0x73625B6c...73e504a32</div>
<svg class="a" style="left:393.1px;top:293.90000000000003px" width="6" height="6" viewBox="0 0 6 6"><rect x="0.5" y="1.8" width="3.7" height="3.7" rx="0.8" fill="none" stroke="#9aa2a9" stroke-width="0.55"/><path d="M1.9 1.6 V1.3 Q1.9 0.5 2.7 0.5 H4.6 Q5.4 0.5 5.4 1.3 V3.2 Q5.4 4 4.6 4 H4.3" fill="none" stroke="#9aa2a9" stroke-width="0.55"/></svg>
<div class="a" style="left:405.9px;top:292.1px;width:25.10px;height:9.40px;box-sizing:border-box;background:rgba(0,161,134,.1);border:0.5px solid rgba(0,161,134,.12);border-radius:2.2px"></div>
<div class="a" style="left:416.3px;top:296.00px;font-size:3.30px;color:#00a186;font-weight:700;">IN</div>
<svg class="a" style="left:436.2px;top:294.3px" width="4.4" height="5" viewBox="0 0 4.4 5"><path d="M0.5 0.4 H2.9 L3.9 1.4 V4.6 H0.5Z" fill="none" stroke="#6c757d" stroke-width="0.5"/><path d="M1.3 2 H3 M1.3 3 H3" stroke="#adb5bd" stroke-width="0.35"/></svg>
<div class="a" style="left:442.3px;top:295.00px;font-size:5.80px;color:#212529;font-weight:400;transform:scaleX(0.9200);transform-origin:0 0;">0xa1b40044...B86156c6b</div>
<svg class="a" style="left:508.4px;top:293.90000000000003px" width="6" height="6" viewBox="0 0 6 6"><rect x="0.5" y="1.8" width="3.7" height="3.7" rx="0.8" fill="none" stroke="#9aa2a9" stroke-width="0.55"/><path d="M1.9 1.6 V1.3 Q1.9 0.5 2.7 0.5 H4.6 Q5.4 0.5 5.4 1.3 V3.2 Q5.4 4 4.6 4 H4.3" fill="none" stroke="#9aa2a9" stroke-width="0.55"/></svg>
<div class="a" style="left:538.2px;top:295.00px;font-size:5.80px;color:#212529;font-weight:400;transform:scaleX(0.9200);transform-origin:0 0;">0 ETH</div>
<div class="a" style="left:579.6px;top:296.00px;font-size:4.80px;color:#6c757d;font-weight:400;">0.00008294</div>
<div class="a" style="left:105.5px;top:306.0px;width:509.40px;height:0.55px;background:#edf0f3"></div>
<div class="a" style="left:110.9px;top:309.40000000000003px;width:11.10px;height:10.70px;box-sizing:border-box;background:#fff;border:0.5px solid #e6e9ed;border-radius:2.2px"></div>
<svg class="a" style="left:113.6px;top:312.7px" width="6" height="4.2" viewBox="0 0 6 4.2"><path d="M0.3 2.1 Q3 -0.9 5.7 2.1 Q3 5.1 0.3 2.1Z" fill="#5c636a"/><circle cx="3" cy="2.1" r="1.05" fill="#fff"/><circle cx="3" cy="2.1" r="0.6" fill="#343a40"/></svg>
<div class="a" style="left:128px;top:313.00px;font-size:5.80px;color:#0784c3;font-weight:400;transform:scaleX(0.9200);transform-origin:0 0;">0xad8867701d...</div>
<svg class="a" style="left:172px;top:311.90000000000003px" width="6" height="6" viewBox="0 0 6 6"><rect x="0.5" y="1.8" width="3.7" height="3.7" rx="0.8" fill="none" stroke="#9aa2a9" stroke-width="0.55"/><path d="M1.9 1.6 V1.3 Q1.9 0.5 2.7 0.5 H4.6 Q5.4 0.5 5.4 1.3 V3.2 Q5.4 4 4.6 4 H4.3" fill="none" stroke="#9aa2a9" stroke-width="0.55"/></svg>
<div class="a" style="left:196.2px;top:310.1px;width:35.80px;height:9.50px;box-sizing:border-box;background:#f8f9fa;border:0.5px solid #e3e6ea;border-radius:2px"></div>
<div class="a" style="left:196.4px;width:35.40px;text-align:center;top:313.00px;font-size:4.40px;color:#495057;font-weight:400;transform:scaleX(0.9000);transform-origin:50% 0;-webkit-text-stroke:0px">Set String</div>
<div class="a" style="left:243.9px;top:313.00px;font-size:5.80px;color:#0784c3;font-weight:400;transform:scaleX(0.9200);transform-origin:0 0;">23474176</div>
<div class="a" style="left:280.3px;top:313.00px;font-size:5.80px;color:#212529;font-weight:400;transform:scaleX(0.9300);transform-origin:0 0;">167 days ago</div>
<div class="a" style="left:327.7px;top:313.00px;font-size:5.80px;color:#0784c3;font-weight:400;transform:scaleX(0.9200);transform-origin:0 0;">0x73625B6c...73e504a32</div>
<svg class="a" style="left:393.1px;top:311.90000000000003px" width="6" height="6" viewBox="0 0 6 6"><rect x="0.5" y="1.8" width="3.7" height="3.7" rx="0.8" fill="none" stroke="#9aa2a9" stroke-width="0.55"/><path d="M1.9 1.6 V1.3 Q1.9 0.5 2.7 0.5 H4.6 Q5.4 0.5 5.4 1.3 V3.2 Q5.4 4 4.6 4 H4.3" fill="none" stroke="#9aa2a9" stroke-width="0.55"/></svg>
<div class="a" style="left:405.9px;top:310.1px;width:25.10px;height:9.40px;box-sizing:border-box;background:rgba(0,161,134,.1);border:0.5px solid rgba(0,161,134,.12);border-radius:2.2px"></div>
<div class="a" style="left:416.3px;top:314.00px;font-size:3.30px;color:#00a186;font-weight:700;">IN</div>
<svg class="a" style="left:436.2px;top:312.3px" width="4.4" height="5" viewBox="0 0 4.4 5"><path d="M0.5 0.4 H2.9 L3.9 1.4 V4.6 H0.5Z" fill="none" stroke="#6c757d" stroke-width="0.5"/><path d="M1.3 2 H3 M1.3 3 H3" stroke="#adb5bd" stroke-width="0.35"/></svg>
<div class="a" style="left:442.3px;top:313.00px;font-size:5.80px;color:#212529;font-weight:400;transform:scaleX(0.9200);transform-origin:0 0;">0xa1b40044...B86156c6b</div>
<svg class="a" style="left:508.4px;top:311.90000000000003px" width="6" height="6" viewBox="0 0 6 6"><rect x="0.5" y="1.8" width="3.7" height="3.7" rx="0.8" fill="none" stroke="#9aa2a9" stroke-width="0.55"/><path d="M1.9 1.6 V1.3 Q1.9 0.5 2.7 0.5 H4.6 Q5.4 0.5 5.4 1.3 V3.2 Q5.4 4 4.6 4 H4.3" fill="none" stroke="#9aa2a9" stroke-width="0.55"/></svg>
<div class="a" style="left:538.2px;top:313.00px;font-size:5.80px;color:#212529;font-weight:400;transform:scaleX(0.9200);transform-origin:0 0;">0 ETH</div>
<div class="a" style="left:579.6px;top:314.00px;font-size:4.80px;color:#6c757d;font-weight:400;">0.00008558</div>
<div class="a" style="left:105.5px;top:324.0px;width:509.40px;height:0.55px;background:#edf0f3"></div>
<div class="a" style="left:110.9px;top:327.40000000000003px;width:11.10px;height:10.70px;box-sizing:border-box;background:#fff;border:0.5px solid #e6e9ed;border-radius:2.2px"></div>
<svg class="a" style="left:113.6px;top:330.7px" width="6" height="4.2" viewBox="0 0 6 4.2"><path d="M0.3 2.1 Q3 -0.9 5.7 2.1 Q3 5.1 0.3 2.1Z" fill="#5c636a"/><circle cx="3" cy="2.1" r="1.05" fill="#fff"/><circle cx="3" cy="2.1" r="0.6" fill="#343a40"/></svg>
<div class="a" style="left:128px;top:331.00px;font-size:5.80px;color:#0784c3;font-weight:400;transform:scaleX(0.9200);transform-origin:0 0;">0xd02f0313501...</div>
<svg class="a" style="left:172px;top:329.90000000000003px" width="6" height="6" viewBox="0 0 6 6"><rect x="0.5" y="1.8" width="3.7" height="3.7" rx="0.8" fill="none" stroke="#9aa2a9" stroke-width="0.55"/><path d="M1.9 1.6 V1.3 Q1.9 0.5 2.7 0.5 H4.6 Q5.4 0.5 5.4 1.3 V3.2 Q5.4 4 4.6 4 H4.3" fill="none" stroke="#9aa2a9" stroke-width="0.55"/></svg>
<div class="a" style="left:196.2px;top:328.1px;width:35.80px;height:9.50px;box-sizing:border-box;background:#f8f9fa;border:0.5px solid #e3e6ea;border-radius:2px"></div>
<div class="a" style="left:196.4px;width:35.40px;text-align:center;top:331.00px;font-size:4.40px;color:#495057;font-weight:400;transform:scaleX(0.9000);transform-origin:50% 0;-webkit-text-stroke:0px">Set String</div>
<div class="a" style="left:243.9px;top:331.00px;font-size:5.80px;color:#0784c3;font-weight:400;transform:scaleX(0.9200);transform-origin:0 0;">23427071</div>
<div class="a" style="left:280.3px;top:331.00px;font-size:5.80px;color:#212529;font-weight:400;transform:scaleX(0.9300);transform-origin:0 0;">173 days ago</div>
<div class="a" style="left:327.7px;top:331.00px;font-size:5.80px;color:#0784c3;font-weight:400;transform:scaleX(0.9200);transform-origin:0 0;">0x73625B6c...73e504a32</div>
<svg class="a" style="left:393.1px;top:329.90000000000003px" width="6" height="6" viewBox="0 0 6 6"><rect x="0.5" y="1.8" width="3.7" height="3.7" rx="0.8" fill="none" stroke="#9aa2a9" stroke-width="0.55"/><path d="M1.9 1.6 V1.3 Q1.9 0.5 2.7 0.5 H4.6 Q5.4 0.5 5.4 1.3 V3.2 Q5.4 4 4.6 4 H4.3" fill="none" stroke="#9aa2a9" stroke-width="0.55"/></svg>
<div class="a" style="left:405.9px;top:328.1px;width:25.10px;height:9.40px;box-sizing:border-box;background:rgba(0,161,134,.1);border:0.5px solid rgba(0,161,134,.12);border-radius:2.2px"></div>
<div class="a" style="left:416.3px;top:332.00px;font-size:3.30px;color:#00a186;font-weight:700;">IN</div>
<svg class="a" style="left:436.2px;top:330.3px" width="4.4" height="5" viewBox="0 0 4.4 5"><path d="M0.5 0.4 H2.9 L3.9 1.4 V4.6 H0.5Z" fill="none" stroke="#6c757d" stroke-width="0.5"/><path d="M1.3 2 H3 M1.3 3 H3" stroke="#adb5bd" stroke-width="0.35"/></svg>
<div class="a" style="left:442.3px;top:331.00px;font-size:5.80px;color:#212529;font-weight:400;transform:scaleX(0.9200);transform-origin:0 0;">0xa1b40044...B86156c6b</div>
<svg class="a" style="left:508.4px;top:329.90000000000003px" width="6" height="6" viewBox="0 0 6 6"><rect x="0.5" y="1.8" width="3.7" height="3.7" rx="0.8" fill="none" stroke="#9aa2a9" stroke-width="0.55"/><path d="M1.9 1.6 V1.3 Q1.9 0.5 2.7 0.5 H4.6 Q5.4 0.5 5.4 1.3 V3.2 Q5.4 4 4.6 4 H4.3" fill="none" stroke="#9aa2a9" stroke-width="0.55"/></svg>
<div class="a" style="left:538.2px;top:331.00px;font-size:5.80px;color:#212529;font-weight:400;transform:scaleX(0.9200);transform-origin:0 0;">0 ETH</div>
<div class="a" style="left:579.6px;top:332.00px;font-size:4.80px;color:#6c757d;font-weight:400;">0.00009888</div>
<div class="a" style="left:105.5px;top:342.0px;width:509.40px;height:0.55px;background:#edf0f3"></div>
<div class="a" style="left:110.9px;top:345.40000000000003px;width:11.10px;height:10.70px;box-sizing:border-box;background:#fff;border:0.5px solid #e6e9ed;border-radius:2.2px"></div>
<svg class="a" style="left:113.6px;top:348.7px" width="6" height="4.2" viewBox="0 0 6 4.2"><path d="M0.3 2.1 Q3 -0.9 5.7 2.1 Q3 5.1 0.3 2.1Z" fill="#5c636a"/><circle cx="3" cy="2.1" r="1.05" fill="#fff"/><circle cx="3" cy="2.1" r="0.6" fill="#343a40"/></svg>
<div class="a" style="left:128px;top:349.00px;font-size:5.80px;color:#0784c3;font-weight:400;transform:scaleX(0.9200);transform-origin:0 0;">0xad82c312d8...</div>
<svg class="a" style="left:172px;top:347.90000000000003px" width="6" height="6" viewBox="0 0 6 6"><rect x="0.5" y="1.8" width="3.7" height="3.7" rx="0.8" fill="none" stroke="#9aa2a9" stroke-width="0.55"/><path d="M1.9 1.6 V1.3 Q1.9 0.5 2.7 0.5 H4.6 Q5.4 0.5 5.4 1.3 V3.2 Q5.4 4 4.6 4 H4.3" fill="none" stroke="#9aa2a9" stroke-width="0.55"/></svg>
<div class="a" style="left:196.2px;top:346.1px;width:35.80px;height:9.50px;box-sizing:border-box;background:#f8f9fa;border:0.5px solid #e3e6ea;border-radius:2px"></div>
<div class="a" style="left:196.4px;width:35.40px;text-align:center;top:349.00px;font-size:4.40px;color:#495057;font-weight:400;transform:scaleX(0.9000);transform-origin:50% 0;-webkit-text-stroke:0px">Set String</div>
<div class="a" style="left:243.9px;top:349.00px;font-size:5.80px;color:#0784c3;font-weight:400;transform:scaleX(0.9200);transform-origin:0 0;">23411198</div>
<div class="a" style="left:280.3px;top:349.00px;font-size:5.80px;color:#212529;font-weight:400;transform:scaleX(0.9300);transform-origin:0 0;">175 days ago</div>
<div class="a" style="left:327.7px;top:349.00px;font-size:5.80px;color:#0784c3;font-weight:400;transform:scaleX(0.9200);transform-origin:0 0;">0x73625B6c...73e504a32</div>
<svg class="a" style="left:393.1px;top:347.90000000000003px" width="6" height="6" viewBox="0 0 6 6"><rect x="0.5" y="1.8" width="3.7" height="3.7" rx="0.8" fill="none" stroke="#9aa2a9" stroke-width="0.55"/><path d="M1.9 1.6 V1.3 Q1.9 0.5 2.7 0.5 H4.6 Q5.4 0.5 5.4 1.3 V3.2 Q5.4 4 4.6 4 H4.3" fill="none" stroke="#9aa2a9" stroke-width="0.55"/></svg>
<div class="a" style="left:405.9px;top:346.1px;width:25.10px;height:9.40px;box-sizing:border-box;background:rgba(0,161,134,.1);border:0.5px solid rgba(0,161,134,.12);border-radius:2.2px"></div>
<div class="a" style="left:416.3px;top:350.00px;font-size:3.30px;color:#00a186;font-weight:700;">IN</div>
<svg class="a" style="left:436.2px;top:348.3px" width="4.4" height="5" viewBox="0 0 4.4 5"><path d="M0.5 0.4 H2.9 L3.9 1.4 V4.6 H0.5Z" fill="none" stroke="#6c757d" stroke-width="0.5"/><path d="M1.3 2 H3 M1.3 3 H3" stroke="#adb5bd" stroke-width="0.35"/></svg>
<div class="a" style="left:442.3px;top:349.00px;font-size:5.80px;color:#212529;font-weight:400;transform:scaleX(0.9200);transform-origin:0 0;">0xa1b40044...B86156c6b</div>
<svg class="a" style="left:508.4px;top:347.90000000000003px" width="6" height="6" viewBox="0 0 6 6"><rect x="0.5" y="1.8" width="3.7" height="3.7" rx="0.8" fill="none" stroke="#9aa2a9" stroke-width="0.55"/><path d="M1.9 1.6 V1.3 Q1.9 0.5 2.7 0.5 H4.6 Q5.4 0.5 5.4 1.3 V3.2 Q5.4 4 4.6 4 H4.3" fill="none" stroke="#9aa2a9" stroke-width="0.55"/></svg>
<div class="a" style="left:538.2px;top:349.00px;font-size:5.80px;color:#212529;font-weight:400;transform:scaleX(0.9200);transform-origin:0 0;">0 ETH</div>
<div class="a" style="left:579.6px;top:350.00px;font-size:4.80px;color:#6c757d;font-weight:400;">0.0000804</div>
<div class="a" style="left:105.5px;top:360.0px;width:509.40px;height:0.55px;background:#edf0f3"></div>
<div class="a" style="left:110.9px;top:363.40000000000003px;width:11.10px;height:10.70px;box-sizing:border-box;background:#fff;border:0.5px solid #e6e9ed;border-radius:2.2px"></div>
<svg class="a" style="left:113.6px;top:366.7px" width="6" height="4.2" viewBox="0 0 6 4.2"><path d="M0.3 2.1 Q3 -0.9 5.7 2.1 Q3 5.1 0.3 2.1Z" fill="#5c636a"/><circle cx="3" cy="2.1" r="1.05" fill="#fff"/><circle cx="3" cy="2.1" r="0.6" fill="#343a40"/></svg>
<div class="a" style="left:128px;top:367.00px;font-size:5.80px;color:#0784c3;font-weight:400;transform:scaleX(0.9200);transform-origin:0 0;">0x4d096150c2...</div>
<svg class="a" style="left:172px;top:365.90000000000003px" width="6" height="6" viewBox="0 0 6 6"><rect x="0.5" y="1.8" width="3.7" height="3.7" rx="0.8" fill="none" stroke="#9aa2a9" stroke-width="0.55"/><path d="M1.9 1.6 V1.3 Q1.9 0.5 2.7 0.5 H4.6 Q5.4 0.5 5.4 1.3 V3.2 Q5.4 4 4.6 4 H4.3" fill="none" stroke="#9aa2a9" stroke-width="0.55"/></svg>
<div class="a" style="left:196.2px;top:364.1px;width:35.80px;height:9.50px;box-sizing:border-box;background:#f8f9fa;border:0.5px solid #e3e6ea;border-radius:2px"></div>
<div class="a" style="left:196.4px;width:35.40px;text-align:center;top:367.00px;font-size:4.40px;color:#495057;font-weight:400;transform:scaleX(0.9000);transform-origin:50% 0;-webkit-text-stroke:0px">Set String</div>
<div class="a" style="left:243.9px;top:367.00px;font-size:5.80px;color:#0784c3;font-weight:400;transform:scaleX(0.9200);transform-origin:0 0;">23177506</div>
<div class="a" style="left:280.3px;top:367.00px;font-size:5.80px;color:#212529;font-weight:400;transform:scaleX(0.9300);transform-origin:0 0;">208 days ago</div>
<div class="a" style="left:327.7px;top:367.00px;font-size:5.80px;color:#0784c3;font-weight:400;transform:scaleX(0.9200);transform-origin:0 0;">0x73625B6c...73e504a32</div>
<svg class="a" style="left:393.1px;top:365.90000000000003px" width="6" height="6" viewBox="0 0 6 6"><rect x="0.5" y="1.8" width="3.7" height="3.7" rx="0.8" fill="none" stroke="#9aa2a9" stroke-width="0.55"/><path d="M1.9 1.6 V1.3 Q1.9 0.5 2.7 0.5 H4.6 Q5.4 0.5 5.4 1.3 V3.2 Q5.4 4 4.6 4 H4.3" fill="none" stroke="#9aa2a9" stroke-width="0.55"/></svg>
<div class="a" style="left:405.9px;top:364.1px;width:25.10px;height:9.40px;box-sizing:border-box;background:rgba(0,161,134,.1);border:0.5px solid rgba(0,161,134,.12);border-radius:2.2px"></div>
<div class="a" style="left:416.3px;top:368.00px;font-size:3.30px;color:#00a186;font-weight:700;">IN</div>
<svg class="a" style="left:436.2px;top:366.3px" width="4.4" height="5" viewBox="0 0 4.4 5"><path d="M0.5 0.4 H2.9 L3.9 1.4 V4.6 H0.5Z" fill="none" stroke="#6c757d" stroke-width="0.5"/><path d="M1.3 2 H3 M1.3 3 H3" stroke="#adb5bd" stroke-width="0.35"/></svg>
<div class="a" style="left:442.3px;top:367.00px;font-size:5.80px;color:#212529;font-weight:400;transform:scaleX(0.9200);transform-origin:0 0;">0xa1b40044...B86156c6b</div>
<svg class="a" style="left:508.4px;top:365.90000000000003px" width="6" height="6" viewBox="0 0 6 6"><rect x="0.5" y="1.8" width="3.7" height="3.7" rx="0.8" fill="none" stroke="#9aa2a9" stroke-width="0.55"/><path d="M1.9 1.6 V1.3 Q1.9 0.5 2.7 0.5 H4.6 Q5.4 0.5 5.4 1.3 V3.2 Q5.4 4 4.6 4 H4.3" fill="none" stroke="#9aa2a9" stroke-width="0.55"/></svg>
<div class="a" style="left:538.2px;top:367.00px;font-size:5.80px;color:#212529;font-weight:400;transform:scaleX(0.9200);transform-origin:0 0;">0 ETH</div>
<div class="a" style="left:579.6px;top:368.00px;font-size:4.80px;color:#6c757d;font-weight:400;">0.00009078</div>
<div class="a" style="left:105.5px;top:378.0px;width:509.40px;height:0.55px;background:#edf0f3"></div>
<div class="a" style="left:110.9px;top:381.40000000000003px;width:11.10px;height:10.70px;box-sizing:border-box;background:#fff;border:0.5px solid #e6e9ed;border-radius:2.2px"></div>
<svg class="a" style="left:113.6px;top:384.7px" width="6" height="4.2" viewBox="0 0 6 4.2"><path d="M0.3 2.1 Q3 -0.9 5.7 2.1 Q3 5.1 0.3 2.1Z" fill="#5c636a"/><circle cx="3" cy="2.1" r="1.05" fill="#fff"/><circle cx="3" cy="2.1" r="0.6" fill="#343a40"/></svg>
<div class="a" style="left:128px;top:385.00px;font-size:5.80px;color:#0784c3;font-weight:400;transform:scaleX(0.9200);transform-origin:0 0;">0x6435785e0b...</div>
<svg class="a" style="left:172px;top:383.90000000000003px" width="6" height="6" viewBox="0 0 6 6"><rect x="0.5" y="1.8" width="3.7" height="3.7" rx="0.8" fill="none" stroke="#9aa2a9" stroke-width="0.55"/><path d="M1.9 1.6 V1.3 Q1.9 0.5 2.7 0.5 H4.6 Q5.4 0.5 5.4 1.3 V3.2 Q5.4 4 4.6 4 H4.3" fill="none" stroke="#9aa2a9" stroke-width="0.55"/></svg>
<div class="a" style="left:196.2px;top:382.1px;width:35.80px;height:9.50px;box-sizing:border-box;background:#f8f9fa;border:0.5px solid #e3e6ea;border-radius:2px"></div>
<div class="a" style="left:196.4px;width:35.40px;text-align:center;top:385.00px;font-size:4.40px;color:#495057;font-weight:400;transform:scaleX(0.9000);transform-origin:50% 0;-webkit-text-stroke:0px">Set String</div>
<div class="a" style="left:243.9px;top:385.00px;font-size:5.80px;color:#0784c3;font-weight:400;transform:scaleX(0.9200);transform-origin:0 0;">23042511</div>
<div class="a" style="left:280.3px;top:385.00px;font-size:5.80px;color:#212529;font-weight:400;transform:scaleX(0.9300);transform-origin:0 0;">224 days ago</div>
<div class="a" style="left:327.7px;top:385.00px;font-size:5.80px;color:#0784c3;font-weight:400;transform:scaleX(0.9200);transform-origin:0 0;">0x73625B6c...73e504a32</div>
<svg class="a" style="left:393.1px;top:383.90000000000003px" width="6" height="6" viewBox="0 0 6 6"><rect x="0.5" y="1.8" width="3.7" height="3.7" rx="0.8" fill="none" stroke="#9aa2a9" stroke-width="0.55"/><path d="M1.9 1.6 V1.3 Q1.9 0.5 2.7 0.5 H4.6 Q5.4 0.5 5.4 1.3 V3.2 Q5.4 4 4.6 4 H4.3" fill="none" stroke="#9aa2a9" stroke-width="0.55"/></svg>
<div class="a" style="left:405.9px;top:382.1px;width:25.10px;height:9.40px;box-sizing:border-box;background:rgba(0,161,134,.1);border:0.5px solid rgba(0,161,134,.12);border-radius:2.2px"></div>
<div class="a" style="left:416.3px;top:386.00px;font-size:3.30px;color:#00a186;font-weight:700;">IN</div>
<svg class="a" style="left:436.2px;top:384.3px" width="4.4" height="5" viewBox="0 0 4.4 5"><path d="M0.5 0.4 H2.9 L3.9 1.4 V4.6 H0.5Z" fill="none" stroke="#6c757d" stroke-width="0.5"/><path d="M1.3 2 H3 M1.3 3 H3" stroke="#adb5bd" stroke-width="0.35"/></svg>
<div class="a" style="left:442.3px;top:385.00px;font-size:5.80px;color:#212529;font-weight:400;transform:scaleX(0.9200);transform-origin:0 0;">0xa1b40044...B86156c6b</div>
<svg class="a" style="left:508.4px;top:383.90000000000003px" width="6" height="6" viewBox="0 0 6 6"><rect x="0.5" y="1.8" width="3.7" height="3.7" rx="0.8" fill="none" stroke="#9aa2a9" stroke-width="0.55"/><path d="M1.9 1.6 V1.3 Q1.9 0.5 2.7 0.5 H4.6 Q5.4 0.5 5.4 1.3 V3.2 Q5.4 4 4.6 4 H4.3" fill="none" stroke="#9aa2a9" stroke-width="0.55"/></svg>
<div class="a" style="left:538.2px;top:385.00px;font-size:5.80px;color:#212529;font-weight:400;transform:scaleX(0.9200);transform-origin:0 0;">0 ETH</div>
<div class="a" style="left:579.6px;top:386.00px;font-size:4.80px;color:#6c757d;font-weight:400;">0.0000766</div>
<div class="a" style="left:105.5px;top:396.0px;width:509.40px;height:0.55px;background:#edf0f3"></div>
<div class="a" style="left:110.9px;top:399.40000000000003px;width:11.10px;height:10.70px;box-sizing:border-box;background:#fff;border:0.5px solid #e6e9ed;border-radius:2.2px"></div>
<svg class="a" style="left:113.6px;top:402.7px" width="6" height="4.2" viewBox="0 0 6 4.2"><path d="M0.3 2.1 Q3 -0.9 5.7 2.1 Q3 5.1 0.3 2.1Z" fill="#5c636a"/><circle cx="3" cy="2.1" r="1.05" fill="#fff"/><circle cx="3" cy="2.1" r="0.6" fill="#343a40"/></svg>
<div class="a" style="left:128px;top:403.00px;font-size:5.80px;color:#0784c3;font-weight:400;transform:scaleX(0.9200);transform-origin:0 0;">0xd1e966e9ba...</div>
<svg class="a" style="left:172px;top:401.90000000000003px" width="6" height="6" viewBox="0 0 6 6"><rect x="0.5" y="1.8" width="3.7" height="3.7" rx="0.8" fill="none" stroke="#9aa2a9" stroke-width="0.55"/><path d="M1.9 1.6 V1.3 Q1.9 0.5 2.7 0.5 H4.6 Q5.4 0.5 5.4 1.3 V3.2 Q5.4 4 4.6 4 H4.3" fill="none" stroke="#9aa2a9" stroke-width="0.55"/></svg>
<div class="a" style="left:196.2px;top:400.1px;width:35.80px;height:9.50px;box-sizing:border-box;background:#f8f9fa;border:0.5px solid #e3e6ea;border-radius:2px"></div>
<div class="a" style="left:196.4px;width:35.40px;text-align:center;top:403.00px;font-size:4.40px;color:#495057;font-weight:400;transform:scaleX(0.9000);transform-origin:50% 0;-webkit-text-stroke:0px">Set String</div>
<div class="a" style="left:243.9px;top:403.00px;font-size:5.80px;color:#0784c3;font-weight:400;transform:scaleX(0.9200);transform-origin:0 0;">22962471</div>
<div class="a" style="left:280.3px;top:403.00px;font-size:5.80px;color:#212529;font-weight:400;transform:scaleX(0.9300);transform-origin:0 0;">234 days ago</div>
<div class="a" style="left:327.7px;top:403.00px;font-size:5.80px;color:#0784c3;font-weight:400;transform:scaleX(0.9200);transform-origin:0 0;">0x73625B6c...73e504a32</div>
<svg class="a" style="left:393.1px;top:401.90000000000003px" width="6" height="6" viewBox="0 0 6 6"><rect x="0.5" y="1.8" width="3.7" height="3.7" rx="0.8" fill="none" stroke="#9aa2a9" stroke-width="0.55"/><path d="M1.9 1.6 V1.3 Q1.9 0.5 2.7 0.5 H4.6 Q5.4 0.5 5.4 1.3 V3.2 Q5.4 4 4.6 4 H4.3" fill="none" stroke="#9aa2a9" stroke-width="0.55"/></svg>
<div class="a" style="left:405.9px;top:400.1px;width:25.10px;height:9.40px;box-sizing:border-box;background:rgba(0,161,134,.1);border:0.5px solid rgba(0,161,134,.12);border-radius:2.2px"></div>
<div class="a" style="left:416.3px;top:404.00px;font-size:3.30px;color:#00a186;font-weight:700;">IN</div>
<svg class="a" style="left:436.2px;top:402.3px" width="4.4" height="5" viewBox="0 0 4.4 5"><path d="M0.5 0.4 H2.9 L3.9 1.4 V4.6 H0.5Z" fill="none" stroke="#6c757d" stroke-width="0.5"/><path d="M1.3 2 H3 M1.3 3 H3" stroke="#adb5bd" stroke-width="0.35"/></svg>
<div class="a" style="left:442.3px;top:403.00px;font-size:5.80px;color:#212529;font-weight:400;transform:scaleX(0.9200);transform-origin:0 0;">0xa1b40044...B86156c6b</div>
<svg class="a" style="left:508.4px;top:401.90000000000003px" width="6" height="6" viewBox="0 0 6 6"><rect x="0.5" y="1.8" width="3.7" height="3.7" rx="0.8" fill="none" stroke="#9aa2a9" stroke-width="0.55"/><path d="M1.9 1.6 V1.3 Q1.9 0.5 2.7 0.5 H4.6 Q5.4 0.5 5.4 1.3 V3.2 Q5.4 4 4.6 4 H4.3" fill="none" stroke="#9aa2a9" stroke-width="0.55"/></svg>
<div class="a" style="left:538.2px;top:403.00px;font-size:5.80px;color:#212529;font-weight:400;transform:scaleX(0.9200);transform-origin:0 0;">0 ETH</div>
<div class="a" style="left:579.6px;top:404.00px;font-size:4.80px;color:#6c757d;font-weight:400;">0.00008132</div>
<div class="a" style="left:179.3px;top:378px;width:360.90px;height:20.90px;background:#fdfdfe;border-radius:3.5px;box-shadow:0 0.5px 5px rgba(140,152,164,.28)"></div>
<svg class="a" style="left:183.6px;top:385.5px" width="5.4" height="5.4" viewBox="0 0 5.4 5.4"><path d="M2.7 0.4 A2.3 2.3 0 1 0 5 2.9 Q4 2.9 3.7 2 Q2.8 1.8 2.7 0.4Z" fill="none" stroke="#343a40" stroke-width="0.55"/><circle cx="1.8" cy="2.3" r="0.35" fill="#343a40"/><circle cx="2.9" cy="3.6" r="0.35" fill="#343a40"/></svg>
<div class="a" style="left:190.5px;top:386.00px;font-size:5.42px;color:#212529;font-weight:400;-webkit-text-stroke:0.1px currentColor">This website <span style="color:#0784c3">uses cookies to improve your experience</span>. By continuing to use this website, you agree to its <span style="color:#0784c3">Terms</span> and <span style="color:#0784c3">Privacy Policy</span>.</div>
<div class="a" style="left:508.8px;top:382px;width:27.40px;height:12.70px;background:#0784c3;border-radius:2.5px"></div>
<div class="a" style="left:508.8px;width:27.40px;text-align:center;top:386.00px;font-size:5.30px;color:#fff;font-weight:400;-webkit-text-stroke:0.15px currentColor">Got it!</div>
<div class="a" style="left:0px;top:405px;width:720.00px;height:1.00px;background:#000"></div>
</div></body></html>
